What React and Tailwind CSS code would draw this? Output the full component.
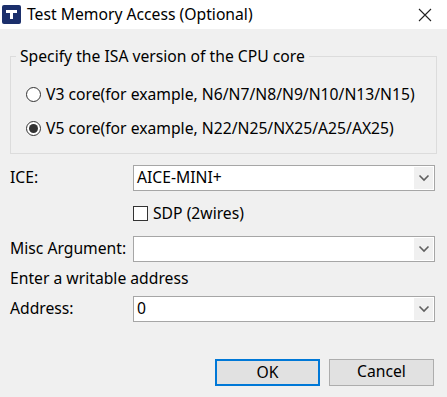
import React from "react";

const font = { fontFamily: '"Noto Sans", "Liberation Sans", sans-serif' };

const Arrow = () => (
	<svg width="12" height="8" viewBox="0 0 12 8" fill="none">
		<path d="M1.5 1.5 L6 6 L10.5 1.5" stroke="#606060" strokeWidth="1.6" />
	</svg>
);

const Combo = ({ value }) => (
	<div className="flex h-[26px] w-[302px] items-stretch border border-[#a6a6a6] bg-white">
		<div className="flex flex-1 items-center pl-[3px] text-black">{value}</div>
		<div className="my-[1px] mr-[1px] flex w-[20px] items-center justify-center border-l border-white bg-[#f0f0f0]">
			<Arrow />
		</div>
	</div>
);

const Radio = ({ checked }) => (
	<span className="flex h-[15px] w-[15px] shrink-0 items-center justify-center rounded-full border border-[#333] bg-white">
		{checked && <span className="h-[9px] w-[9px] rounded-full bg-[#333]" />}
	</span>
);

export default function App() {
	return (
		<div className="h-[397px] w-[447px] overflow-hidden bg-[#f0f0f0] text-[15.7px] text-black" style={font}>
			<div className="flex h-[29px] items-center bg-white">
				<div className="ml-[2px] flex h-[19px] w-[19px] items-center justify-center rounded-[2px] bg-[#1b2f6b]">
					<svg width="13" height="11" viewBox="0 0 13 11">
						<path d="M1 1 H12 V4 H8 V10 H5 V4 H1 Z" fill="white" />
					</svg>
				</div>
				<span className="ml-[6px] leading-none">Test Memory Access (Optional)</span>
				<svg className="ml-auto mr-[15px]" width="14" height="14" viewBox="0 0 14 14">
					<path d="M1 1 L13 13 M13 1 L1 13" stroke="#222" strokeWidth="1.1" />
				</svg>
			</div>

			<fieldset className="mx-[10px] mt-[17px] h-[108px] border border-[#dcdcdc] pl-[5px]">
				<legend className="px-[4px] leading-[20px]">Specify the ISA version of the CPU core</legend>
				<div className="ml-[10px] mt-[17px] flex items-center gap-[5px]">
					<Radio />
					<span className="whitespace-nowrap">V3 core(for example, N6/N7/N8/N9/N10/N13/N15)</span>
				</div>
				<div className="ml-[10px] mt-[10px] flex items-center gap-[5px]">
					<Radio checked />
					<span className="whitespace-nowrap">V5 core(for example, N22/N25/NX25/A25/AX25)</span>
				</div>
			</fieldset>

			<div className="ml-[10px] mt-[11px] flex items-center">
				<span className="w-[123px]">ICE:</span>
				<Combo value="AICE-MINI+" />
			</div>
			<div className="ml-[133px] mt-[11px] flex items-center gap-[5px]">
				<span className="h-[15px] w-[15px] border border-[#333] bg-white" />
				<span>SDP (2wires)</span>
			</div>
			<div className="ml-[10px] mt-[10px] flex items-center">
				<span className="w-[123px]">Misc Argument:</span>
				<Combo value="" />
			</div>
			<div className="ml-[10px] mt-[6px] leading-[20px]">Enter a writable address</div>
			<div className="ml-[10px] mt-[8px] flex items-center">
				<span className="w-[123px]">Address:</span>
				<Combo value="0" />
			</div>

			<div className="mr-[13px] mt-[37px] flex justify-end gap-[9px]">
				<button className="h-[27px] w-[105px] border-2 border-[#0078d7] bg-[#e1e1e1]">OK</button>
				<button className="h-[27px] w-[105px] border border-[#adadad] bg-[#e1e1e1]">Cancel</button>
			</div>
		</div>
	);
}
